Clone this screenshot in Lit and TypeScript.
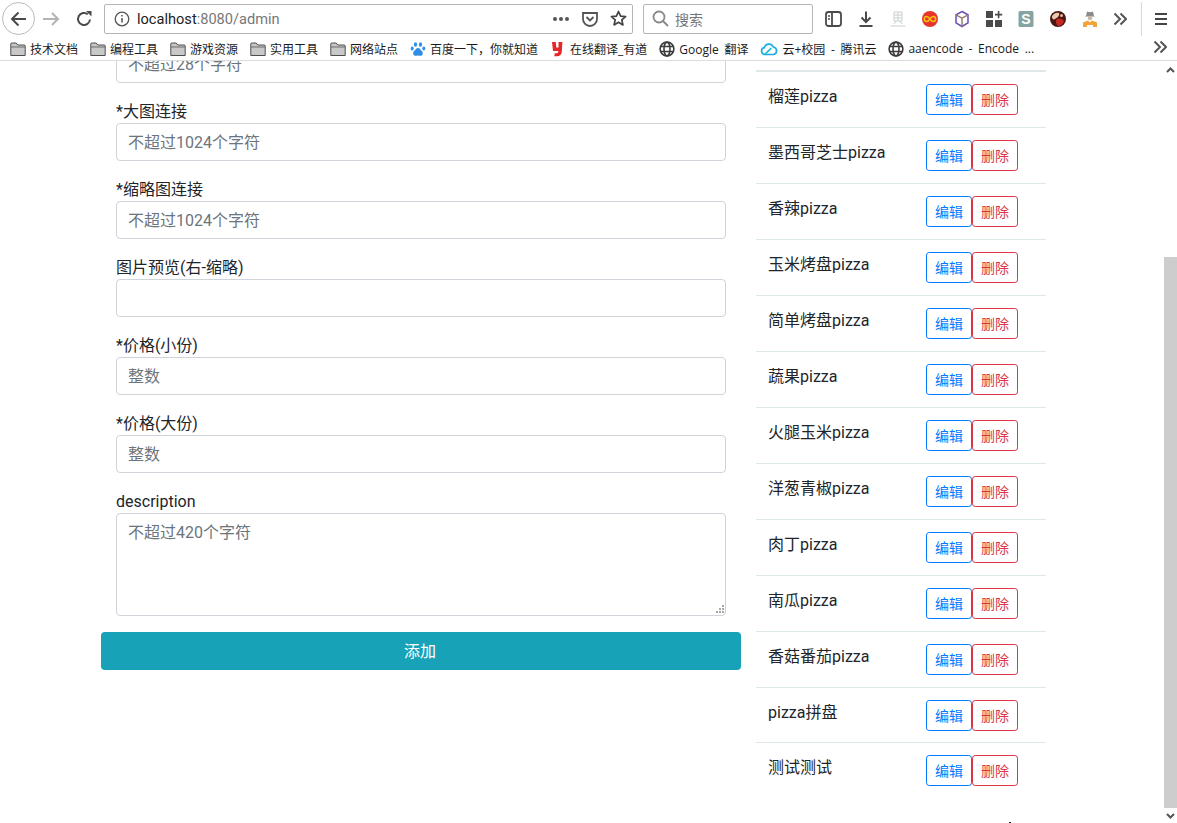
import { LitElement, css, html, svg } from "lit";
import { customElement } from "lit/decorators.js";

const folder = svg`<svg width="16" height="16" viewBox="0 0 16 16"><path d="M.8 14.500V3A1 1 0 0 1 1.800 2h4.400l1.500 2H14.200a1 1 0 0 1 1 1v9.500z" fill="#c8c8c8" stroke="#4d4d4d" stroke-width="1"/><path d="M1 6h14" stroke="#6d6d6d" fill="none"/></svg>`;
const globe = svg`<svg width="16" height="16" viewBox="0 0 16 16" fill="none" stroke="#3d3d3d" stroke-width="1.600"><circle cx="8" cy="8" r="6.900"/><ellipse cx="8" cy="8" rx="3" ry="6.900"/><path d="M1.500 5.500h13M1.500 10.500h13"/></svg>`;
const paw = svg`<svg width="16" height="16" viewBox="0 0 16 16" fill="#2f8fe8"><ellipse cx="5.500" cy="3.500" rx="1.600" ry="2.200"/><ellipse cx="10.500" cy="3.500" rx="1.600" ry="2.200"/><ellipse cx="2.200" cy="7.500" rx="1.500" ry="2"/><ellipse cx="13.800" cy="7.500" rx="1.500" ry="2"/><path d="M8 7c-2 0-2.500 2-4 3.200C2.500 11.500 3 15 6 14.800c1 0 1.300-.4 2-.4s1 .4 2 .4c3 .2 3.500-3.300 2-4.600C10.500 9 10 7 8 7z"/></svg>`;
const youdao = svg`<svg width="16" height="16" viewBox="0 0 16 16" fill="#e5262b"><path d="M2 1h3.800l.5 5.500h2.200V1h3.900l-.6 9.500c-.2 3-1.800 4.800-5 4.800H4.300l.4-3h1.500c1.400 0 2-.5 2.200-2.300H3z"/></svg>`;
const cloud = svg`<svg width="18" height="16" viewBox="0 0 18 16" fill="none" stroke="#1fa9ea" stroke-width="1.700"><path d="M4.800 13.500a3.500 3.500 0 0 1-.5-6.900A4.800 4.800 0 0 1 13.300 6a3.800 3.800 0 0 1 .2 7.500z"/><path d="M4.800 13.500l6.400-6.400" stroke="#16c0d8"/></svg>`;

const chevrons = svg`<svg width="14" height="14" viewBox="0 0 14 14" fill="none" stroke="#555" stroke-width="2"><path d="M1.500 1.500L7 7l-5.500 5.500M7.500 1.500L13 7l-5.500 5.500"/></svg>`;

const bookmarks = [
  { icon: folder, label: "技术文档" },
  { icon: folder, label: "编程工具" },
  { icon: folder, label: "游戏资源" },
  { icon: folder, label: "实用工具" },
  { icon: folder, label: "网络站点" },
  { icon: paw, label: "百度一下，你就知道" },
  { icon: youdao, label: "在线翻译_有道" },
  { icon: globe, label: "Google 翻译" },
  { icon: cloud, label: "云+校园 - 腾讯云" },
  { icon: globe, label: "aaencode - Encode ..." },
];

const extensions = [
  svg`<svg width="18" height="18" viewBox="0 0 18 18" fill="none" stroke="#4a4a4a" stroke-width="1.800"><rect x="1" y="2" width="15" height="14" rx="2.500"/><path d="M7 2v14"/><path d="M3 6h2M3 9h2" stroke-width="1.300"/></svg>`,
  svg`<svg width="18" height="18" viewBox="0 0 18 18" fill="none" stroke="#4a4a4a" stroke-width="2"><path d="M9 1.500v10M4.500 7.500L9 12l4.500-4.500"/><path d="M2.500 16h13"/></svg>`,
  svg`<svg width="18" height="18" viewBox="0 0 18 18" fill="none" stroke="#c9cfcf" stroke-width="1"><path d="M5 2h8v9H5zM5 5h8M5 8h8M9 2v9M7 11l-2 3M11 11l2 3M1.500 16h15"/></svg>`,
  svg`<svg width="18" height="18" viewBox="0 0 18 18"><circle cx="9" cy="9" r="8" fill="#e8352b"/><path d="M9 9c-1.300-2-2-2.500-3.200-2.500a2.500 2.500 0 0 0 0 5C7 11.500 7.700 11 9 9c1.300-2 2-2.500 3.200-2.500a2.500 2.500 0 0 1 0 5C11 11.500 10.300 11 9 9z" fill="none" stroke="#f5c211" stroke-width="1.500"/></svg>`,
  svg`<svg width="18" height="18" viewBox="0 0 18 18" fill="none" stroke-width="1.500"><path d="M9 1.500l6 3.300v8L9 16.500 3 12.800v-8z" stroke="#6a4fb0"/><path d="M3 4.800l6 3.400 6-3.400M9 8.200v8.300" stroke="#9a7f70"/></svg>`,
  svg`<svg width="18" height="18" viewBox="0 0 18 18" fill="#4a4a4a"><rect x="1" y="1" width="7" height="7"/><rect x="1" y="10" width="7" height="7"/><rect x="10" y="10" width="7" height="7"/><path d="M12.800 1h1.600v2.800h2.800v1.600h-2.800v2.800h-1.600V5.400H10V3.800h2.800z"/></svg>`,
  svg`<svg width="18" height="18" viewBox="0 0 18 18"><rect x="1.500" y="1" width="15" height="16" rx="1.500" fill="#86a5a2"/><text x="9" y="14" text-anchor="middle" font-family="Liberation Sans, sans-serif" font-size="14" font-weight="700" fill="#fff">S</text></svg>`,
  svg`<svg width="18" height="18" viewBox="0 0 18 18"><circle cx="9" cy="9" r="8" fill="#4a1512"/><path d="M3 6c2-3 5-4 7-3 1 3-2 5-4 6-1 1-3 1-3-3z" fill="#ecc9ad"/><path d="M8 9c3-1 6 0 7 2-1 3-3 5-6 5-2-2-3-5-1-7z" fill="#c22a20"/><circle cx="12.500" cy="5.500" r="1.500" fill="#e9b9a0"/></svg>`,
  svg`<svg width="18" height="18" viewBox="0 0 18 18"><path d="M5 6l1-4.500 3 .8 3-.8L13 6l1.500.5h-11z" fill="#8a8a8a"/><circle cx="9" cy="8" r="2.300" fill="#c9b8a5"/><path d="M2 17v-4.500L7 10.500l2 2 2-2 5 2V17h-4v-2H6v2z" fill="#f2a33a"/></svg>`,
  chevrons,
];

const fields = [
  { label: "", placeholder: "不超过28个字符" },
  { label: "*大图连接", placeholder: "不超过1024个字符" },
  { label: "*缩略图连接", placeholder: "不超过1024个字符" },
  { label: "图片预览(右-缩略)", placeholder: "" },
  { label: "*价格(小份)", placeholder: "整数" },
  { label: "*价格(大份)", placeholder: "整数" },
];

const pizzas = [
  "榴莲pizza",
  "墨西哥芝士pizza",
  "香辣pizza",
  "玉米烤盘pizza",
  "简单烤盘pizza",
  "蔬果pizza",
  "火腿玉米pizza",
  "洋葱青椒pizza",
  "肉丁pizza",
  "南瓜pizza",
  "香菇番茄pizza",
  "pizza拼盘",
  "测试测试",
];

@customElement("app-root")
export class AppRoot extends LitElement {
  static styles = css`
    :host {
      display: block;
      height: 823px;
      overflow: hidden;
      background: #fff;
      color: #212529;
      font-family: "Roboto", "Noto Sans CJK SC", sans-serif;
    }

    * {
      box-sizing: border-box;
    }

    .toolbar {
      height: 37px;
      display: flex;
      align-items: center;
      padding-left: 2px;
    }

    .back {
      width: 33px;
      height: 33px;
      border: 1px solid #b9b9b9;
      border-radius: 50%;
      display: flex;
      align-items: center;
      justify-content: center;
    }

    .nav {
      width: 32.5px;
      display: flex;
      justify-content: center;
    }

    .url {
      margin-left: 4px;
      width: 529px;
      height: 30px;
      border: 1px solid #b5b5b5;
      border-radius: 2px;
      display: flex;
      align-items: center;
      padding: 0 5px 0 9px;
      font-size: 14.600px;
      color: #222;
    }

    .url .host {
      margin-left: 7px;
      flex: 1;
    }

    .url .host span {
      color: #777;
    }

    .url svg + svg {
      margin-left: 12px;
    }

    .search {
      margin-left: 10px;
      width: 170px;
      height: 30px;
      border: 1px solid #b5b5b5;
      border-radius: 2px;
      display: flex;
      align-items: center;
      gap: 6px;
      padding-left: 8px;
      font-size: 14px;
      color: #777;
    }

    .extensions {
      margin-left: 12px;
      display: flex;
      align-items: center;
      gap: 14px;
    }

    .extensions svg {
      display: block;
    }

    .divider {
      margin-left: 14px;
      width: 1px;
      height: 34px;
      background: #d8d8d8;
    }

    .menu {
      margin-left: 12px;
      display: block;
    }

    .bookmarks {
      height: 24px;
      display: flex;
      align-items: center;
      gap: 12px;
      padding-left: 10px;
      border-bottom: 1px solid #dcdcdc;
      font-family: "Open Sans", "Noto Sans CJK SC", sans-serif;
      font-size: 12px;
      word-spacing: 2.500px;
      color: #1a1a1a;
      white-space: nowrap;
    }

    .bookmark {
      display: flex;
      align-items: center;
      gap: 4px;
    }

    .bookmark svg {
      display: block;
    }

    .more {
      margin-left: auto;
      margin-right: 10px;
      display: block;
    }

    .page {
      position: relative;
      height: 762px;
      display: flex;
      overflow: hidden;
    }

    .content {
      flex: 1;
      display: flex;
      gap: 15px;
      padding-left: 101px;
    }

    form {
      width: 640px;
      margin-top: -40px;
    }

    .field {
      position: relative;
      padding: 0 15px;
      margin-bottom: 16px;
    }

    label {
      display: block;
      height: 24px;
      font-size: 16px;
      line-height: 26px;
    }

    input,
    textarea {
      display: block;
      width: 100%;
      height: 38px;
      padding: 6px 12px 6px 11px;
      border: 1px solid #ced4da;
      border-radius: 4px;
      font: inherit;
      font-size: 16px;
      line-height: 24px;
      color: #495057;
      background: #fff;
      outline: none;
    }

    textarea {
      height: 103px;
      padding-top: 7px;
      resize: none;
    }

    input::placeholder,
    textarea::placeholder {
      color: #6c757d;
      opacity: 1;
    }

    .grip {
      position: absolute;
      right: 17px;
      bottom: 3px;
      display: block;
    }

    .submit {
      display: block;
      width: 100%;
      height: 38px;
      padding: 0 2px 2px 0;
      border: 0;
      border-radius: 4px;
      background: #17a2b8;
      color: #fff;
      font: inherit;
      font-size: 16px;
    }

    aside {
      width: 290px;
      margin-top: 9px;
      border-top: 2px solid #dee8e9;
    }

    .row {
      height: 56px;
      display: flex;
      justify-content: space-between;
      padding: 12px 28px 0 12px;
      border-top: 1px solid #dee8e9;
      font-size: 16px;
      line-height: 26px;
    }

    .row:first-child {
      height: 55px;
      border-top: 0;
    }

    .row:last-child {
      margin-top: -1px;
    }

    .row > span {
      height: 24px;
    }

    .actions {
      display: flex;
    }

    .actions button {
      width: 46px;
      height: 31px;
      padding: 0;
      background: #fff;
      border: 1px solid;
      border-radius: 3.200px;
      font: inherit;
      font-size: 14px;
    }

    .edit {
      color: #007bff;
      border-color: #007bff;
    }

    .remove {
      color: #dc3545;
      border-color: #dc3545;
    }

    .scrollbar {
      width: 13px;
      display: flex;
      flex-direction: column;
    }

    .arrow {
      flex: none;
      display: flex;
      justify-content: center;
      align-items: center;
    }

    .arrow.up {
      height: 17px;
    }

    .arrow.down {
      height: 15px;
    }

    .track {
      flex: 1;
      padding-top: 179px;
    }

    .thumb {
      height: 551px;
      background: #cdcdcd;
    }

    .speck {
      position: absolute;
      left: 1009px;
      bottom: 0;
      width: 2px;
      height: 1px;
      background: #222;
    }
  `;

  render() {
    return html`
      <div class="toolbar">
        <div class="back">
          <svg width="20" height="20" viewBox="0 0 20 20" fill="none" stroke="#4a4a4a" stroke-width="2"><path d="M17 10H3.500M9.500 3.500L3 10l6.500 6.500"/></svg>
        </div>
        <div class="nav">
          <svg width="18" height="18" viewBox="0 0 18 18" fill="none" stroke="#b4b4b4" stroke-width="2"><path d="M1 9h15M10 3l6 6-6 6"/></svg>
        </div>
        <div class="nav">
          <svg width="18" height="18" viewBox="0 0 18 18" fill="none" stroke="#4a4a4a" stroke-width="2"><path d="M15 9.500A6 6 0 1 1 12.800 4.300"/><path d="M11 1h5.500v5.500z" fill="#4a4a4a" stroke="none"/></svg>
        </div>
        <div class="url">
          <svg width="16" height="16" viewBox="0 0 16 16" fill="none" stroke="#555" stroke-width="1.300"><circle cx="8" cy="8" r="6.800"/><path d="M8 7v4.500M8 4v1.500" stroke-width="1.500"/></svg>
          <div class="host">localhost<span>:8080/admin</span></div>
          <svg width="18" height="6" viewBox="0 0 18 6" fill="#555"><circle cx="3" cy="3" r="2"/><circle cx="9" cy="3" r="2"/><circle cx="15" cy="3" r="2"/></svg>
          <svg width="16" height="16" viewBox="0 0 16 16" fill="none" stroke="#555" stroke-width="1.800"><path d="M1 2h14v6a7 7 0 0 1-14 0z"/><path d="M4.500 6L8 9.500 11.500 6"/></svg>
          <svg width="17" height="17" viewBox="0 0 17 17" fill="none" stroke="#444" stroke-width="1.700" stroke-linejoin="round"><path d="M8.500 1.500l2.100 4.600 5 .5-3.800 3.300 1.100 5-4.400-2.600-4.400 2.600 1.100-5L1.400 6.600l5-.5z"/></svg>
        </div>
        <div class="search">
          <svg width="17" height="17" viewBox="0 0 17 17" fill="none" stroke="#888" stroke-width="1.800"><circle cx="7" cy="7" r="5.500"/><path d="M11 11l5 5"/></svg>
          搜索
        </div>
        <div class="extensions">${extensions}</div>
        <div class="divider"></div>
        <svg class="menu" width="14" height="14" viewBox="0 0 14 14" fill="none" stroke="#444" stroke-width="2"><path d="M1 2h12M1 7h12M1 12h12"/></svg>
      </div>
      <div class="bookmarks">
        ${bookmarks.map(
          (b) => html`<div class="bookmark">${b.icon}<span>${b.label}</span></div>`
        )}
        <div class="more">${chevrons}</div>
      </div>
      <div class="page">
        <div class="content">
          <form>
            ${fields.map(
              (f) => html`<div class="field">
                <label>${f.label}</label>
                <input type="text" placeholder=${f.placeholder} />
              </div>`
            )}
            <div class="field">
              <label>description</label>
              <textarea placeholder="不超过420个字符"></textarea>
              <svg class="grip" width="9" height="8" viewBox="0 0 9 8" fill="#a8a8a8"><rect x="7" y="0" width="2" height="2"/><rect x="4" y="3" width="2" height="2"/><rect x="7" y="3" width="2" height="2"/><rect x="1" y="6" width="2" height="2"/><rect x="4" y="6" width="2" height="2"/><rect x="7" y="6" width="2" height="2"/></svg>
            </div>
            <button class="submit" type="button">添加</button>
          </form>
          <aside>
            ${pizzas.map(
              (name) => html`<div class="row">
                <span>${name}</span>
                <div class="actions">
                  <button class="edit" type="button">编辑</button>
                  <button class="remove" type="button">删除</button>
                </div>
              </div>`
            )}
          </aside>
        </div>
        <div class="scrollbar">
          <div class="arrow up">
            <svg width="9" height="6" viewBox="0 0 9 6" fill="none" stroke="#555" stroke-width="2"><path d="M1 5l3.500-3.500L8 5"/></svg>
          </div>
          <div class="track"><div class="thumb"></div></div>
          <div class="arrow down">
            <svg width="9" height="6" viewBox="0 0 9 6" fill="none" stroke="#555" stroke-width="2"><path d="M1 1l3.500 3.500L8 1"/></svg>
          </div>
        </div>
        <div class="speck"></div>
      </div>
    `;
  }
}
